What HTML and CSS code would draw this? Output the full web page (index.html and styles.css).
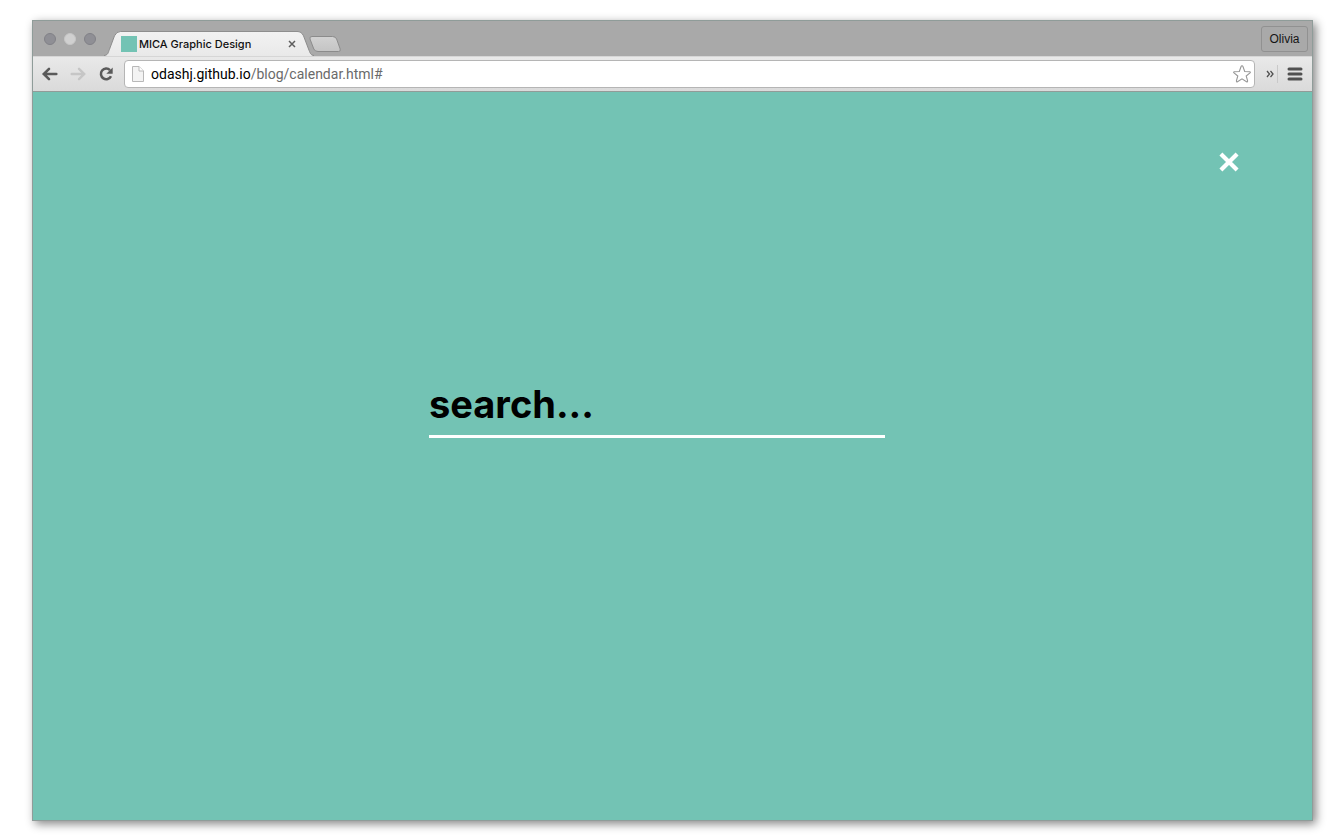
FILE: index.html
```html
<!DOCTYPE html>
<html lang="en">
<head>
<meta charset="utf-8">
<title>MICA Graphic Design</title>
<link rel="stylesheet" href="styles.css">
</head>
<body>
<div class="window">
  <header class="tabstrip">
    <div class="lights">
      <button class="light" aria-label="Close window"></button>
      <button class="light light-pale" aria-label="Minimize window"></button>
      <button class="light" aria-label="Zoom window"></button>
    </div>
    <div class="tab">
      <svg class="tab-shape" viewBox="0 0 210 26" preserveAspectRatio="none" aria-hidden="true">
        <defs><linearGradient id="tabfill" x1="0" y1="0" x2="0" y2="1"><stop offset="0" stop-color="#f2f2f2"/><stop offset="1" stop-color="#e9e9e9"/></linearGradient></defs>
        <path d="M0 26 C4 25 4 23 5.500 19 L10.500 5 Q12.500 .5 16.500 .5 H193 Q197.500 .5 199.500 5 L205 20 C206.500 24 207 25 210 26 Z" fill="url(#tabfill)"/>
        <path d="M0 25.500 C4 25 4 23 5.500 19 L10.500 5 Q12.500 .5 16.500 .5 H193 Q197.500 .5 199.500 5 L205 20 C206.500 24 207 25 210 25.500" fill="none" stroke="#8b8b8b"/>
      </svg>
      <span class="favicon"></span>
      <span class="tab-title">MICA Graphic Design</span>
      <button class="tab-close" aria-label="Close tab"><svg width="8" height="8" viewBox="0 0 8 8"><path d="M1 1 L7 7 M7 1 L1 7" stroke="#5e5e5e" stroke-width="1.500"/></svg></button>
    </div>
    <button class="new-tab" aria-label="New tab"><svg width="34" height="18" viewBox="0 0 34 18">
      <defs><linearGradient id="newfill" x1="0" y1="0" x2="0" y2="1"><stop offset="0" stop-color="#d2d2d2"/><stop offset="1" stop-color="#c4c4c4"/></linearGradient></defs>
      <path d="M4 1.500 H24.500 Q27.500 1.500 28.600 4 L32.200 14 Q33 16.500 30.500 16.500 H10 Q7 16.500 5.800 14 L2 4 Q1.200 1.500 4 1.500Z" fill="url(#newfill)" stroke="#8b8b8b"/></svg></button>
    <button class="profile">Olivia</button>
  </header>
  <nav class="toolbar" aria-label="Browser">
    <div class="nav-buttons">
      <button class="icon-button" aria-label="Back"><svg width="18" height="16" viewBox="0 0 18 16"><path d="M8 2.800 L2.800 8 L8 13.200 M3 8 H15.300" fill="none" stroke="#5a5a5a" stroke-width="2.600" stroke-linecap="round" stroke-linejoin="miter"/></svg></button>
      <button class="icon-button" aria-label="Forward"><svg width="18" height="16" viewBox="0 0 18 16"><path d="M10 2.800 L15.200 8 L10 13.200 M15 8 H2.700" fill="none" stroke="#c6c6c6" stroke-width="2.400" stroke-linecap="round" stroke-linejoin="miter"/></svg></button>
      <button class="icon-button" aria-label="Reload"><svg width="18" height="16" viewBox="0 0 18 16"><path d="M13 4.200 A5.300 5.300 0 1 0 14 10.200" fill="none" stroke="#5a5a5a" stroke-width="2.500"/><path d="M15.700 1.400 V7.800 H9.300Z" fill="#5a5a5a"/></svg></button>
    </div>
    <div class="address">
      <svg width="14" height="18" viewBox="0 0 14 18" aria-hidden="true"><path d="M1.500 1.500 H8 L12.500 6 V16.500 H1.500Z" fill="#f3f3f3" stroke="#b8b8b8"/><path d="M8 1.500 V6 H12.500" fill="#fff" stroke="#b8b8b8"/></svg>
      <a class="url" href="#"><span class="host">odashj.github.io</span>/blog/calendar.html#</a>
      <button class="icon-button star" aria-label="Bookmark this page"><svg width="20" height="20" viewBox="0 0 20 20"><path d="M10 1.800 Q10.700 1.800 11 2.700 L12.700 7.500 L17.600 7.700 Q18.900 8 18 8.900 L14.200 12 L15.600 16.900 Q15.700 18.300 14.500 17.700 L10 14.900 L5.500 17.700 Q4.300 18.300 4.400 16.900 L5.800 12 L2 8.900 Q1.100 8 2.400 7.700 L7.300 7.500 L9 2.700 Q9.300 1.800 10 1.800Z" fill="#fff" stroke="#969696" stroke-width="1.100"/></svg></button>
    </div>
    <button class="icon-button more" aria-label="More extensions"><svg width="8" height="8" viewBox="0 0 8 8"><path d="M1 1 L3.500 4 L1 7 M4.500 1 L7 4 L4.500 7" fill="none" stroke="#505050" stroke-width="1.300"/></svg></button>
    <span class="divider"></span>
    <button class="icon-button" aria-label="Menu"><svg width="16" height="14" viewBox="0 0 16 14"><path d="M2 2 H14 M2 7 H14 M2 12 H14" stroke="#505050" stroke-width="3" stroke-linecap="round"/></svg></button>
  </nav>
  <main class="page">
    <button class="dismiss" aria-label="Close search"><svg width="20" height="20" viewBox="0 0 20 20"><path d="M3.400 3.400 L16.600 16.600 M16.600 3.400 L3.400 16.600" stroke="#fff" stroke-width="4.200" stroke-linecap="square"/></svg></button>
    <form class="search" role="search">
      <input class="search-input" type="text" placeholder="search..." aria-label="Search">
    </form>
  </main>
</div>
</body>
</html>
```
FILE: styles.css
```css
* { box-sizing: border-box; }
body {
  margin: 0;
  min-height: 100vh;
  display: flex;
  padding: 20px 31px 19px 32px;
  background: #fff;
  font-family: Inter, "Liberation Sans", sans-serif;
}
button { padding: 0; border: 0; background: none; font: inherit; }
svg { display: block; }
.window {
  flex: 1;
  min-width: 0;
  display: flex;
  flex-direction: column;
  border: 1px solid #8f9c99;
  box-shadow: 3px 3px 9px rgba(0, 0, 0, .48);
}
.tabstrip {
  display: flex;
  align-items: flex-end;
  height: 35px;
  background: #a9a9a9;
}
.lights {
  align-self: center;
  display: flex;
  gap: 8px;
  padding-left: 11px;
}
.light {
  width: 12px;
  height: 12px;
  border: 1px solid #818187;
  border-radius: 50%;
  background: #8f8f95;
}
.light-pale { background: #d0d0d0; border-color: #c6c6c6; }
.tab {
  position: relative;
  z-index: 1;
  width: 210px;
  height: 25px;
  margin-left: 8px;
  padding: 0 17px;
  display: flex;
  align-items: center;
}
.tab-shape { position: absolute; inset: 0; width: 100%; height: 100%; z-index: -1; }
.favicon { width: 16px; height: 16px; background: #73c3b4; }
.tab-title { flex: 1; margin-left: 2px; font-size: 11px; font-weight: 500; color: #111; white-space: nowrap; }
.tab-close { margin-right: 1px; }
.new-tab { margin: 0 0 3px -6px; }
.profile {
  width: 47px;
  height: 26px;
  margin: 0 4px 4px auto;
  border: 1px solid #919191;
  border-radius: 3px;
  font: 12px "Liberation Sans", sans-serif;
  color: #151515;
}
.toolbar {
  display: flex;
  align-items: center;
  height: 36px;
  padding: 0 9px 0 8px;
  border-top: 1px solid #d6d6d6;
  border-bottom: 1px solid #929b98;
  background: linear-gradient(#e9e9e9, #dadada);
}
.nav-buttons { display: flex; gap: 10px; margin-right: 9px; }
.address {
  flex: 1;
  min-width: 0;
  height: 28px;
  display: flex;
  align-items: center;
  padding: 0 2px 0 6px;
  border: 1px solid #b5b5b5;
  border-radius: 4px;
  background: #fff;
}
.url {
  flex: 1;
  margin-left: 6px;
  font-family: Roboto, sans-serif;
  font-size: 14px;
  color: #6a6a6a;
  text-decoration: none;
  white-space: nowrap;
}
.host { color: #000; }
.more { margin-left: 11px; }
.divider { width: 1px; height: 18px; margin: 0 9px 0 3px; background: #c9c9c9; }
.page {
  flex: 1;
  display: flex;
  flex-direction: column;
  background: #73c3b4;
}
.dismiss { align-self: flex-end; margin: 60px 73px 0 0; }
.search { width: 456px; max-width: 100%; margin: 208px 0 0 396px; }
.search-input {
  width: 100%;
  height: 58px;
  padding: 0 0 8px;
  border: 0;
  border-bottom: 3px solid #fff;
  outline: 0;
  background: transparent;
  font-family: Inter, sans-serif;
  font-size: 38px;
  font-weight: 700;
  color: #000;
}
.search-input::placeholder { color: #000; opacity: 1; }
```
